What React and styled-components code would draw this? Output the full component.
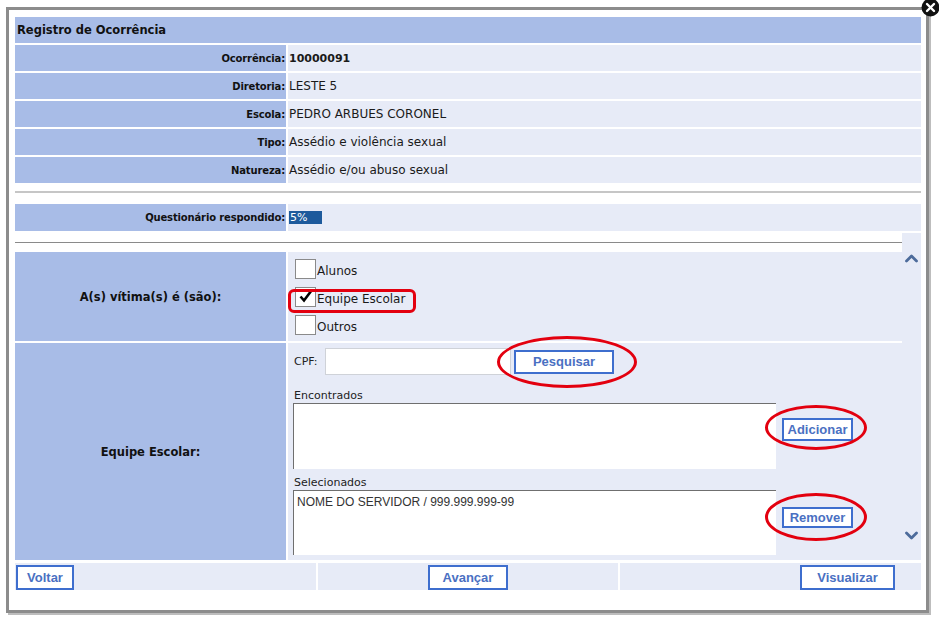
import React from 'react';
import styled, { createGlobalStyle } from 'styled-components';

const color = {
  label: '#a8bce7',
  value: '#e7ebf7',
  border: '#3e6ece',
  buttonText: '#4a70c2',
  red: '#e3000f',
  chevron: '#4d6b9b',
};

const GlobalStyle = createGlobalStyle`
  html, body {
    margin: 0;
    padding: 0;
    background: #fff;
  }
  body {
    font-family: 'DejaVu Sans', Verdana, sans-serif;
    color: #1a1a1a;
  }
  * {
    box-sizing: border-box;
  }
`;

const info = [
  { label: 'Ocorrência:', value: '10000091', strong: true },
  { label: 'Diretoria:', value: 'LESTE 5' },
  { label: 'Escola:', value: 'PEDRO ARBUES CORONEL' },
  { label: 'Tipo:', value: 'Assédio e violência sexual' },
  { label: 'Natureza:', value: 'Assédio e/ou abuso sexual' },
];

const victims = [
  { label: 'Alunos', checked: false },
  { label: 'Equipe Escolar', checked: true, marked: true },
  { label: 'Outros', checked: false },
];

const Chevron = ({ down }) => (
  <svg width="13" height="9" viewBox="0 0 13 9">
    <path
      d={down ? 'M1.5 2 L6.5 7 L11.5 2' : 'M1.5 7 L6.5 2 L11.5 7'}
      fill="none"
      stroke={color.chevron}
      strokeWidth="2.8"
      strokeLinecap="round"
      strokeLinejoin="round"
    />
  </svg>
);

const App = () => (
  <Page>
    <GlobalStyle />
    <Dialog>
      <Close>
        <svg width="19" height="19" viewBox="0 0 19 19">
          <circle cx="9.5" cy="9.5" r="9" fill="#111" />
          <path d="M6 6 L13 13 M13 6 L6 13" stroke="#fff" strokeWidth="2.4" strokeLinecap="round" />
        </svg>
      </Close>

      <InfoGrid>
        <HeaderCell>Registro de Ocorrência</HeaderCell>
        {info.map((row) => (
          <React.Fragment key={row.label}>
            <LabelCell>{row.label}</LabelCell>
            <ValueCell $strong={row.strong}>{row.value}</ValueCell>
          </React.Fragment>
        ))}
      </InfoGrid>

      <Separator />

      <ProgressRow>
        <LabelCell>Questionário respondido:</LabelCell>
        <ValueCell>
          <Progress>5%</Progress>
        </ValueCell>
      </ProgressRow>

      <ScrollArea>
        <ScrollContent>
          <ThinRule />
          <FormRow>
            <BigLabel>A(s) vítima(s) é (são):</BigLabel>
            <ChecksCell>
              {victims.map((item) => (
                <CheckRow key={item.label}>
                  <Box>
                    {item.checked && (
                      <svg width="18" height="18" viewBox="0 0 18 18">
                        <path d="M3.5 8.5 L7 12.5 L14.5 2.5" fill="none" stroke="#000" strokeWidth="2.6" />
                      </svg>
                    )}
                  </Box>
                  <CheckText>{item.label}</CheckText>
                  {item.marked && <MarkRect />}
                </CheckRow>
              ))}
            </ChecksCell>
          </FormRow>

          <FormRow $gap>
            <BigLabel>Equipe Escolar:</BigLabel>
            <StaffCell>
              <SearchLine>
                <SmallText>CPF:</SmallText>
                <CpfInput type="text" />
                <Marked>
                  <Button $width={100} $height={24}>Pesquisar</Button>
                  <MarkEllipse $t={-14} $r={-23} $b={-14} $l={-17} />
                </Marked>
              </SearchLine>

              <ListLabel>Encontrados</ListLabel>
              <ListLine>
                <ListBox $height={66} />
                <Marked $top={15}>
                  <Button $width={71} $height={23}>Adicionar</Button>
                  <MarkEllipse $t={-13} $r={-14} $b={-9} $l={-17} />
                </Marked>
              </ListLine>

              <ListLabel $top={7}>Selecionados</ListLabel>
              <ListLine>
                <ListBox $height={65}>
                  <ListItem>NOME DO SERVIDOR / 999.999.999-99</ListItem>
                </ListBox>
                <Marked $top={17}>
                  <Button $width={71} $height={21}>Remover</Button>
                  <MarkEllipse $t={-14} $r={-14} $b={-13} $l={-17} />
                </Marked>
              </ListLine>
            </StaffCell>
          </FormRow>
        </ScrollContent>

        <Scrollbar>
          <Chevron />
          <Chevron down />
        </Scrollbar>
      </ScrollArea>

      <Footer>
        <FooterCell $justify="flex-start">
          <Button $width={58}>Voltar</Button>
        </FooterCell>
        <FooterCell $justify="center">
          <Button $width={80}>Avançar</Button>
        </FooterCell>
        <FooterCell $justify="flex-end">
          <Button $width={95}>Visualizar</Button>
        </FooterCell>
      </Footer>
    </Dialog>
  </Page>
);

const Page = styled.div`
  width: 939px;
  height: 621px;
  overflow: hidden;
  padding: 7px 0 0 6px;
`;

const Dialog = styled.div`
  position: relative;
  width: 923px;
  background: #fff;
  border: 3px solid #8c8c8c;
  box-shadow: 2px 2px 0 #bdbdbd;
  padding: 7px 5px 20px 6px;
`;

const Close = styled.div`
  position: absolute;
  top: -12px;
  right: -14px;
  width: 19px;
  height: 19px;
  line-height: 0;
`;

const InfoGrid = styled.div`
  display: grid;
  grid-template-columns: 271px 1fr;
  grid-auto-rows: 26px;
  gap: 2px;
`;

const HeaderCell = styled.div`
  grid-column: 1 / -1;
  display: flex;
  align-items: center;
  padding-left: 2px;
  background: ${color.label};
  font-size: 11.5px;
  font-weight: bold;
  color: #111;
`;

const LabelCell = styled.div`
  display: flex;
  align-items: center;
  justify-content: flex-end;
  padding-right: 1px;
  background: ${color.label};
  font-size: 10px;
  font-weight: bold;
  letter-spacing: -0.15px;
  color: #111;
`;

const ValueCell = styled.div`
  display: flex;
  align-items: center;
  padding-left: 1px;
  background: ${color.value};
  font-size: ${(p) => (p.$strong ? '11px' : '12px')};
  font-weight: ${(p) => (p.$strong ? 'bold' : 'normal')};
  color: #1a1a1a;
`;

const Separator = styled.div`
  height: 2px;
  margin-top: 8px;
  background: #c6c6c6;
`;

const ProgressRow = styled.div`
  display: grid;
  grid-template-columns: 271px 1fr;
  column-gap: 2px;
  height: 27px;
  margin-top: 11px;
`;

const Progress = styled.div`
  width: 33px;
  height: 13px;
  padding-left: 1px;
  background: #1d5a9c;
  color: #fff;
  font-size: 11px;
  line-height: 13px;
`;

const ScrollArea = styled.div`
  display: flex;
  margin-top: 2px;
`;

const ScrollContent = styled.div`
  flex: 1;
  padding-top: 9px;
`;

const ThinRule = styled.div`
  height: 1px;
  margin-bottom: 9px;
  background: #8a8a8a;
`;

const Scrollbar = styled.div`
  width: 19px;
  display: flex;
  flex-direction: column;
  align-items: center;
  justify-content: space-between;
  padding: 21px 0 20px;
  background: ${color.value};
`;

const FormRow = styled.div`
  display: grid;
  grid-template-columns: 271px 1fr;
  column-gap: 2px;
  margin-top: ${(p) => (p.$gap ? '2px' : '0')};
`;

const BigLabel = styled.div`
  display: flex;
  align-items: center;
  justify-content: center;
  background: ${color.label};
  font-size: 11.5px;
  font-weight: bold;
  color: #111;
`;

const ChecksCell = styled.div`
  display: flex;
  flex-direction: column;
  gap: 8px;
  padding: 7px 0 6px 7px;
  background: ${color.value};
`;

const CheckRow = styled.div`
  position: relative;
  display: flex;
  align-items: flex-end;
  height: 20px;
  width: fit-content;
`;

const Box = styled.span`
  width: 21px;
  height: 20px;
  display: flex;
  align-items: flex-start;
  justify-content: center;
  background: #fff;
  border: 1px solid #8a8a8a;
  line-height: 0;
`;

const CheckText = styled.span`
  margin-left: 1px;
  font-size: 12px;
  line-height: 15px;
  color: #1a1a1a;
`;

const MarkRect = styled.span`
  position: absolute;
  top: 2px;
  bottom: -6px;
  left: -7px;
  right: -11px;
  border: 3px solid ${color.red};
  border-radius: 6px;
  pointer-events: none;
`;

const StaffCell = styled.div`
  display: flex;
  flex-direction: column;
  padding: 5px 0 5px 5px;
  background: ${color.value};
`;

const SearchLine = styled.div`
  display: flex;
  align-items: center;
  height: 27px;
`;

const SmallText = styled.span`
  width: 32px;
  padding-left: 1px;
  font-size: 11px;
  color: #222;
`;

const CpfInput = styled.input`
  width: 186px;
  height: 27px;
  margin: 0 3px 0 0;
  padding: 0 3px;
  background: #fff;
  border: 1px solid #cfd2d8;
  outline: none;
`;

const Marked = styled.div`
  position: relative;
  align-self: flex-start;
  margin-top: ${(p) => p.$top || 0}px;
  line-height: 0;
  ${SearchLine} & {
    align-self: center;
  }
`;

const MarkEllipse = styled.span`
  position: absolute;
  top: ${(p) => p.$t}px;
  right: ${(p) => p.$r}px;
  bottom: ${(p) => p.$b}px;
  left: ${(p) => p.$l}px;
  border: 3.5px solid ${color.red};
  border-radius: 50%;
  pointer-events: none;
`;

const Button = styled.button`
  width: ${(p) => p.$width}px;
  height: ${(p) => p.$height || 25}px;
  padding: 0;
  background: #fff;
  border: 2px solid ${color.border};
  color: ${color.buttonText};
  font-family: 'Liberation Sans', Arial, sans-serif;
  font-size: 13px;
  font-weight: bold;
  text-align: center;
  cursor: pointer;
`;

const ListLabel = styled.div`
  margin-top: ${(p) => p.$top || 14}px;
  padding-left: 1px;
  height: 14px;
  font-size: 11px;
  line-height: 14px;
  color: #222;
`;

const ListLine = styled.div`
  display: flex;
  gap: 6px;
`;

const ListBox = styled.div`
  width: 483px;
  height: ${(p) => p.$height}px;
  background: #fff;
  border-top: 1px solid #6f6f6f;
  border-left: 1px solid #6f6f6f;
  padding: 4px 3px;
`;

const ListItem = styled.div`
  font-family: 'Liberation Sans', Arial, sans-serif;
  font-size: 12px;
  color: #333;
`;

const Footer = styled.div`
  display: grid;
  grid-template-columns: 1fr 1fr 1fr;
  column-gap: 2px;
  margin-top: 3px;
`;

const FooterCell = styled.div`
  display: flex;
  align-items: center;
  justify-content: ${(p) => p.$justify};
  height: 27px;
  padding: 1px ${(p) => (p.$justify === 'flex-end' ? '26px' : '1px')} 0 1px;
  background: ${color.value};
`;

export default App;
